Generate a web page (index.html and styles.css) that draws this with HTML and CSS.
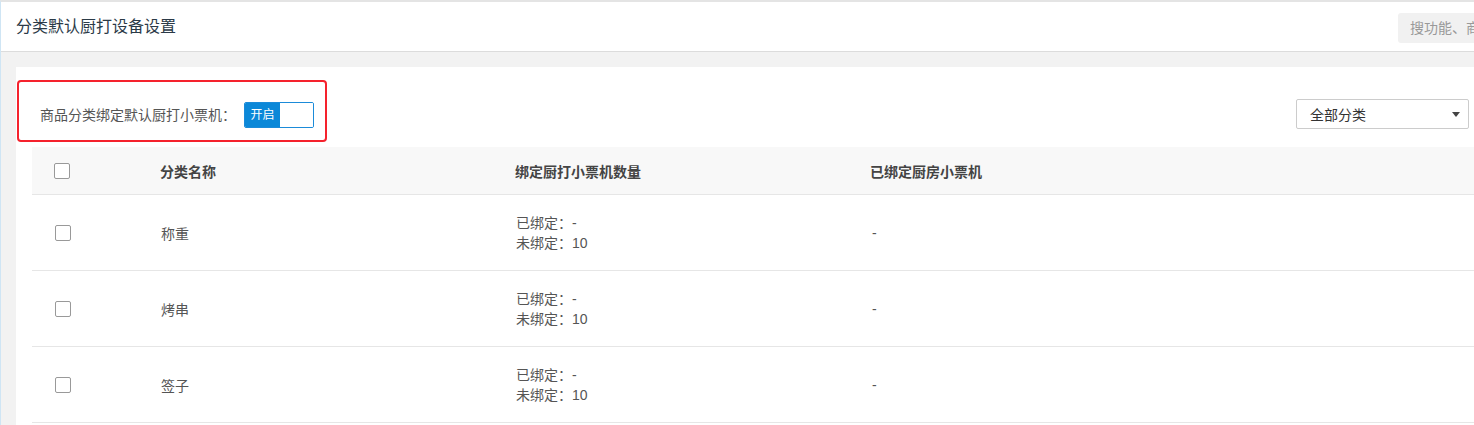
FILE: index.html
```html
<!DOCTYPE html>
<html lang="zh-CN">
<head>
    <meta charset="UTF-8">
    <meta name="viewport" content="width=device-width, initial-scale=1.0">
    <title>分类默认厨打设备设置</title>
    <link rel="stylesheet" href="styles.css">
</head>
<body>
    <div class="page">
        <div class="top-bar">
            <h1 class="page-title">分类默认厨打设备设置</h1>
            <div class="search-box">搜功能、商品、订单</div>
        </div>

        <div class="content">
            <div class="card">
                <div class="toolbar">
                    <div class="bind-setting">
                        <span class="bind-label">商品分类绑定默认厨打小票机：</span>
                        <div class="switch">
                            <span class="switch-on">开启</span>
                            <span class="switch-off"></span>
                        </div>
                    </div>
                    <div class="select-box">
                        <span>全部分类</span>
                        <i class="caret"></i>
                    </div>
                </div>

                <div class="table">
                    <div class="table-row table-head">
                        <div class="cell cell-check"><span class="checkbox"></span></div>
                        <div class="cell">分类名称</div>
                        <div class="cell">绑定厨打小票机数量</div>
                        <div class="cell">已绑定厨房小票机</div>
                    </div>
                    <div class="table-row">
                        <div class="cell cell-check"><span class="checkbox"></span></div>
                        <div class="cell cell-name">称重</div>
                        <div class="cell cell-count">
                            <div>已绑定：-</div>
                            <div>未绑定：10</div>
                        </div>
                        <div class="cell cell-printer">-</div>
                    </div>
                    <div class="table-row">
                        <div class="cell cell-check"><span class="checkbox"></span></div>
                        <div class="cell cell-name">烤串</div>
                        <div class="cell cell-count">
                            <div>已绑定：-</div>
                            <div>未绑定：10</div>
                        </div>
                        <div class="cell cell-printer">-</div>
                    </div>
                    <div class="table-row">
                        <div class="cell cell-check"><span class="checkbox"></span></div>
                        <div class="cell cell-name">签子</div>
                        <div class="cell cell-count">
                            <div>已绑定：-</div>
                            <div>未绑定：10</div>
                        </div>
                        <div class="cell cell-printer">-</div>
                    </div>
                </div>
            </div>
        </div>
    </div>
</body>
</html>
```

FILE: styles.css
```css
* {
    margin: 0;
    padding: 0;
    box-sizing: border-box;
}

body {
    font-family: "Liberation Sans", "Noto Sans CJK SC", sans-serif;
    background: #f2f2f2;
    color: #333;
    overflow: hidden;
}

.page {
    min-height: 100vh;
    border-top: 2px solid #e4e4e4;
    border-left: 1px solid #cfe5f4;
}

/* Top bar */
.top-bar {
    height: 50px;
    background: #fff;
    border-bottom: 1px solid #dcdcdc;
    display: flex;
    align-items: center;
    padding-left: 15px;
    overflow: hidden;
}

.page-title {
    font-size: 16px;
    font-weight: normal;
    color: #2b3a47;
    line-height: 22px;
    margin-top: 1px;
}

.search-box {
    margin-left: auto;
    margin-right: -146px;
    flex-shrink: 0;
    width: 222px;
    height: 30px;
    margin-top: 3px;
    background: #f1f1f1;
    border-radius: 3px;
    padding-left: 12px;
    font-size: 14px;
    line-height: 30px;
    color: #999;
    white-space: nowrap;
}

/* Content */
.content {
    padding: 15px 0 0 15px;
}

.card {
    background: #fff;
    min-height: 400px;
    padding-left: 16px;
}

.toolbar {
    display: flex;
    align-items: flex-start;
    justify-content: space-between;
    padding-right: 5px;
}

.bind-setting {
    display: flex;
    align-items: center;
    width: 310px;
    height: 62px;
    margin-top: 13px;
    margin-left: -15px;
    padding: 20px 0 12px 21px;
    border: 2px solid #f5222d;
    border-radius: 4px;
}

.bind-label {
    font-size: 14px;
    color: #555;
    line-height: 18px;
    width: 204px;
    white-space: nowrap;
}

.switch {
    display: flex;
    width: 70px;
    height: 26px;
    border: 1px solid #1b8bd9;
    border-radius: 2px;
    overflow: hidden;
}

.switch-on {
    width: 35px;
    background: #0b88d8;
    color: #fff;
    font-size: 12px;
    line-height: 24px;
    text-align: center;
}

.switch-off {
    flex: 1;
    background: #fff;
}

.select-box {
    margin-top: 32px;
    width: 173px;
    height: 30px;
    border: 1px solid #cccccc;
    border-radius: 2px;
    display: flex;
    align-items: center;
    justify-content: space-between;
    padding: 0 8px 0 13px;
    font-size: 14px;
    color: #333;
}

.caret {
    width: 0;
    height: 0;
    border-left: 4px solid transparent;
    border-right: 4px solid transparent;
    border-top: 5px solid #444;
}

/* Table */
.table {
    margin-top: 5px;
}

.table-row {
    display: grid;
    grid-template-columns: 128px 355px 355px 1fr;
    align-items: center;
    height: 76px;
    border-bottom: 1px solid #e6e6e6;
}

.table-head {
    height: 48px;
    background: #f8f8f8;
    font-weight: bold;
    font-size: 14px;
    color: #444;
}

.cell-check {
    padding-left: 22px;
    display: flex;
    align-items: center;
}

.table-row:not(.table-head) .cell-check {
    padding-left: 23px;
}

.checkbox {
    display: block;
    width: 16px;
    height: 16px;
    border: 1px solid #999;
    border-radius: 2px;
    background: #fff;
}

.cell-name {
    font-size: 14px;
    color: #555;
    padding-left: 1px;
}

.cell-count {
    font-size: 14px;
    color: #555;
    line-height: 20px;
    padding-left: 1px;
}

.cell-printer {
    font-size: 14px;
    color: #555;
    padding-left: 2px;
}
```
